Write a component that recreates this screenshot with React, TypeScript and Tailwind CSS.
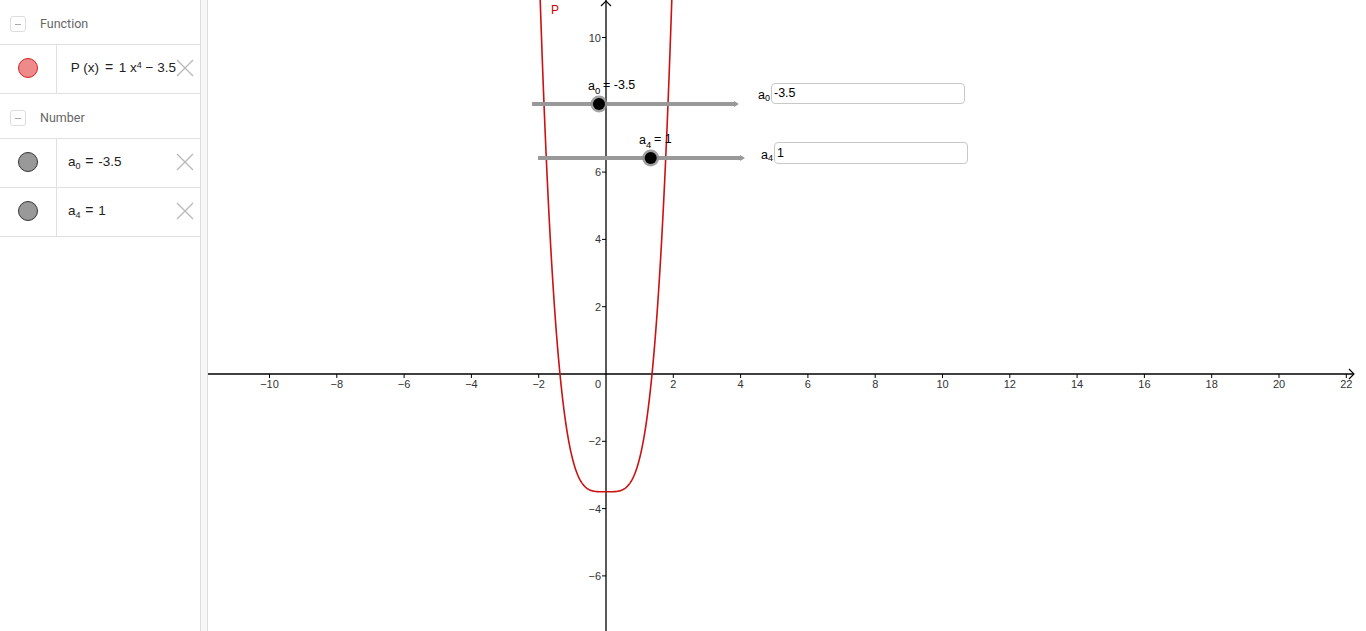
import React from "react";

const OX = 606;
const OY = 374;
const S = 33.65;
const px = (x: number) => OX + x * S;
const py = (y: number) => OY - y * S;

function curvePath() {
  const pts: string[] = [];
  for (let i = 0; i <= 400; i++) {
    const x = -2.05 + (4.1 * i) / 400;
    const y = Math.pow(x, 4) - 3.5;
    pts.push(`${i === 0 ? "M" : "L"}${px(x).toFixed(2)},${py(y).toFixed(2)}`);
  }
  return pts.join(" ");
}

const CollapseIcon = () => (
  <div className="w-[16px] h-[16px] rounded-[3px] border border-[#dddddd] flex items-center justify-center">
    <div className="w-[6px] h-[1px] bg-[#aaa]" />
  </div>
);

const XIcon = () => (
  <svg width="18" height="18" viewBox="0 0 18 18" className="shrink-0">
    <path d="M1 1 L17 17 M17 1 L1 17" stroke="#b8b8b8" strokeWidth="1.3" />
  </svg>
);

function Header({ label }: { label: string }) {
  return (
    <div className="h-[45px] flex items-center pl-[10px] pt-[4px] border-b border-[#e0e0e0] bg-white">
      <CollapseIcon />
      <span className="ml-[14px] text-[12.5px] text-[#666] font-['Roboto',sans-serif]">{label}</span>
    </div>
  );
}

function Row({ dot, children }: { dot: React.ReactNode; children: React.ReactNode }) {
  return (
    <div className="h-[49px] flex border-b border-[#e0e0e0]">
      <div className="w-[57px] flex items-center justify-center border-r border-[#e0e0e0] pb-[2px]">{dot}</div>
      <div className="flex-1 flex items-center pl-[11px] pr-[6px] pb-[2px] justify-between">
        {children}
        <XIcon />
      </div>
    </div>
  );
}

export default function App() {
  const xTicks = [-10, -8, -6, -4, -2, 2, 4, 6, 8, 10, 12, 14, 16, 18, 20, 22];
  const yTicks = [10, 6, 4, 2, -2, -4, -6];
  const fmt = (n: number) => (n < 0 ? "\u2212" + Math.abs(n) : String(n));

  return (
    <div className="w-[1366px] h-[631px] flex bg-white overflow-hidden font-['Liberation_Sans',sans-serif]">
      {/* Algebra panel */}
      <div className="w-[200px] h-full flex flex-col bg-white">
        <Header label="Function" />
        <Row
          dot={
            <div className="w-[20px] h-[20px] rounded-full bg-[#ee8a8a] border-[1.5px] border-[#d42020]" />
          }
        >
          <span className="text-[13.5px] text-[#222] whitespace-nowrap ml-[3px]">
            P (x) <span className="mx-[2px] text-[14px]">=</span> 1 x<sup className="text-[9px]">4</sup> − 3.5
          </span>
        </Row>
        <Header label="Number" />
        <Row dot={<div className="w-[20px] h-[20px] rounded-full bg-[#999] border-[1.5px] border-[#333]" />}>
          <span className="text-[13.5px] text-[#222] whitespace-nowrap">
            a<sub className="text-[9px]">0</sub> <span className="mx-[1px] text-[14px]">=</span> -3.5
          </span>
        </Row>
        <Row dot={<div className="w-[20px] h-[20px] rounded-full bg-[#999] border-[1.5px] border-[#333]" />}>
          <span className="text-[13.5px] text-[#222] whitespace-nowrap">
            a<sub className="text-[9px]">4</sub> <span className="mx-[1px] text-[14px]">=</span> 1
          </span>
        </Row>
      </div>

      {/* Splitter */}
      <div className="w-[8px] h-full bg-[#f7f7f7] border-l border-r border-[#dcdcdc]" />

      {/* Graphics view */}
      <div className="relative flex-1 h-full">
        <svg width="1158" height="631" viewBox="208 0 1158 631" className="block">
          {/* axes */}
          <line x1="208" y1={OY} x2="1354" y2={OY} stroke="#000" strokeWidth="1.3" />
          <path d={`M1349,${OY - 5} L1354,${OY} L1349,${OY + 5}`} fill="none" stroke="#000" strokeWidth="1.1" />
          <line x1={OX} y1="0" x2={OX} y2="631" stroke="#000" strokeWidth="1.3" />
          <path d={`M${OX - 5},6 L${OX},1 L${OX + 5},6`} fill="none" stroke="#000" strokeWidth="1.1" />

          {xTicks.map((t) => (
            <g key={"x" + t}>
              <line x1={px(t)} y1={OY} x2={px(t)} y2={OY + 4} stroke="#000" strokeWidth="1" />
              <text x={px(t)} y={OY + 14} fontSize="11" textAnchor="middle" fill="#333">
                {fmt(t)}
              </text>
            </g>
          ))}
          <text x={OX - 5} y={OY + 14} fontSize="11" textAnchor="end" fill="#333">0</text>

          {yTicks.map((t) => (
            <g key={"y" + t}>
              <line x1={OX - 4} y1={py(t)} x2={OX} y2={py(t)} stroke="#000" strokeWidth="1" />
              <text x={OX - 5} y={py(t) + 4} fontSize="11" textAnchor="end" fill="#333">
                {fmt(t)}
              </text>
            </g>
          ))}

          {/* curve */}
          <path d={curvePath()} fill="none" stroke="#cc1111" strokeWidth="1.6" />
          <text x="551" y="14" fontSize="12" fill="#cc0000">P</text>

          {/* slider a0 */}
          <line x1="532" y1="104" x2="736" y2="104" stroke="#999" strokeWidth="4" />
          <path d="M734,101 L739,104 L734,107 Z" fill="#999" />
          <circle cx="599" cy="104" r="8.5" fill="#8a8a8a" opacity="0.8" />
          <circle cx="599" cy="104" r="6" fill="#000" />
          <text x="588" y="90" fontSize="12.5" fill="#000">a</text>
          <text x="595" y="94" fontSize="9.5" fill="#000">0</text>
          <text x="603" y="89" fontSize="12.5" fill="#000">= -3.5</text>

          {/* slider a4 */}
          <line x1="538" y1="158" x2="742" y2="158" stroke="#999" strokeWidth="4" />
          <path d="M740,155 L745,158 L740,161 Z" fill="#999" />
          <circle cx="650.7" cy="158" r="8.5" fill="#8a8a8a" opacity="0.8" />
          <circle cx="650.7" cy="158" r="6" fill="#000" />
          <text x="639" y="144" fontSize="12.5" fill="#000">a</text>
          <text x="646" y="148" fontSize="9.5" fill="#000">4</text>
          <text x="654" y="143" fontSize="12.5" fill="#000">= 1</text>
        </svg>

        {/* input boxes */}
        <div className="absolute left-[550px] top-[83px] flex items-end">
          <span className="text-[12.5px] text-[#000] leading-none mb-[3px]">
            a<sub className="text-[9px]">0</sub>
          </span>
          <div className="ml-[1px] w-[194px] h-[21px] rounded-[4px] border border-[#c8c8c8] flex items-center pl-[2px] text-[12.5px] text-[#000]">
            -3.5
          </div>
        </div>
        <div className="absolute left-[553px] top-[142px] flex items-end">
          <span className="text-[12.5px] text-[#000] leading-none mb-[3px]">
            a<sub className="text-[9px]">4</sub>
          </span>
          <div className="ml-[1px] w-[194px] h-[22px] rounded-[4px] border border-[#c8c8c8] flex items-center pl-[2px] text-[12.5px] text-[#000]">
            1
          </div>
        </div>
      </div>
    </div>
  );
}
